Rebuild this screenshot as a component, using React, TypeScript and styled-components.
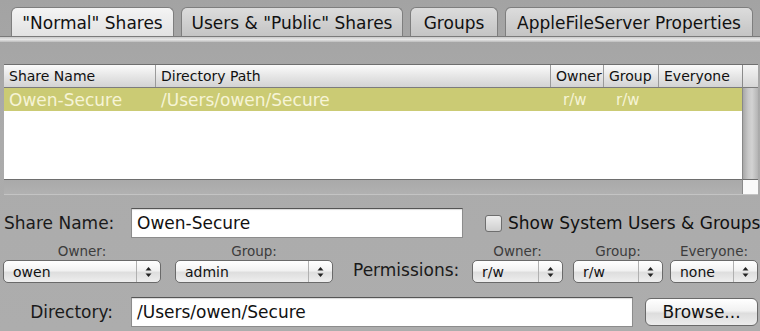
import React from "react";
import styled, { createGlobalStyle } from "styled-components";

const Global = createGlobalStyle`
  html, body { margin: 0; padding: 0; }
  body { font-family: "DejaVu Sans", "Liberation Sans", sans-serif; background: #a9a9a9; }
`;

const Window = styled.div`
  width: 760px;
  height: 331px;
  overflow: hidden;
  background: linear-gradient(180deg, #a3a3a3 0%, #ababab 40%, #adadad 100%);
  display: flex;
  flex-direction: column;
`;

const TabBar = styled.div`
  display: flex;
  gap: 7px;
  padding: 7px 0 0 11px;
  height: 29px;
`;

const Tab = styled.div<{ $active?: boolean; $w: number }>`
  width: ${(p) => p.$w}px;
  height: 29px;
  box-sizing: border-box;
  border: 1px solid #7e7e7e;
  border-bottom: none;
  border-radius: 6px 6px 0 0;
  background: ${(p) =>
    p.$active
      ? "linear-gradient(180deg, #f4f4f4 0%, #e2e2e2 100%)"
      : "linear-gradient(180deg, #dcdcdc 0%, #c4c4c4 100%)"};
  display: flex;
  align-items: center;
  justify-content: center;
  font-size: 17px;
  color: #111;
  padding-top: 1px;
  white-space: nowrap;
`;

const TabBase = styled.div`
  height: 6px;
  border-top: 1px solid #7a7a7a;
  background: linear-gradient(180deg, #c9c9c9 0%, #e6e6e6 50%, #bdbdbd 100%);
  box-sizing: border-box;
`;

const Body = styled.div`
  display: flex;
  flex-direction: column;
  padding: 22px 3px 0 4px;
`;

const TableFrame = styled.div`
  width: 754px;
  display: grid;
  grid-template-columns: 738px 16px;
  grid-template-rows: 23px 92px 14px;
  border-top: 1px solid #6f6f6f;
  border-bottom: 1px solid #c4c4c4;
`;

const HeaderRow = styled.div`
  display: grid;
  grid-template-columns: 152px 395px 53px 55px 83px;
  background: linear-gradient(180deg, #fbfbfb 0%, #e6e6e6 50%, #d3d3d3 100%);
  border-bottom: 1px solid #7c7c7c;
`;

const HeaderCell = styled.div`
  font-size: 14px;
  color: #111;
  padding-left: 5px;
  display: flex;
  align-items: center;
  border-right: 1px solid #9a9a9a;
  &:last-child { border-right: none; }
`;

const HeaderCorner = styled.div`
  background: linear-gradient(180deg, #f4f4f4 0%, #d6d6d6 100%);
  border-left: 1px solid #8a8a8a;
  border-bottom: 1px solid #7c7c7c;
`;

const Rows = styled.div`
  background: #fff;
  display: flex;
  flex-direction: column;
  border-bottom: 1px solid #6e6e6e;
`;

const Row = styled.div<{ $selected?: boolean }>`
  height: 23px;
  display: grid;
  grid-template-columns: 152px 395px 53px 55px 83px;
  background: ${(p) => (p.$selected ? "#cbcb74" : "transparent")};
  color: ${(p) => (p.$selected ? "#f6f4d6" : "#111")};
  align-items: center;
`;

const Cell = styled.div<{ $small?: boolean }>`
  padding-left: ${(p) => (p.$small ? 12 : 5)}px;
  font-size: ${(p) => (p.$small ? 15 : 17)}px;
  white-space: nowrap;
`;

const VScroll = styled.div`
  background: linear-gradient(90deg, #a8a8a8 0%, #c8c8c8 35%, #d2d2d2 60%, #b4b4b4 100%);
  border-left: 1px solid #888;
  border-bottom: 1px solid #6e6e6e;
`;

const HScroll = styled.div`
  background: linear-gradient(180deg, #a9a9a9 0%, #b1b1b1 100%);
`;

const Corner = styled.div`
  background: #fafafa;
  border-left: 1px solid #8a8a8a;
`;

const FormRow = styled.div<{ $mt: number }>`
  display: flex;
  align-items: center;
  margin-top: ${(p) => p.$mt}px;
`;

const Label = styled.div<{ $w: number }>`
  width: ${(p) => p.$w}px;
  text-align: right;
  font-size: 17px;
  color: #1a1a1a;
  flex: none;
  white-space: nowrap;
`;

const TextField = styled.div<{ $w: number }>`
  width: ${(p) => p.$w}px;
  height: 30px;
  box-sizing: border-box;
  background: #fff;
  border: 1px solid #8c8c8c;
  border-top-color: #555;
  box-shadow: inset 0 1px 1px rgba(0, 0, 0, 0.15);
  font-size: 17px;
  color: #111;
  display: flex;
  align-items: center;
  padding-left: 5px;
  flex: none;
`;

const CheckBox = styled.div`
  width: 17px;
  height: 17px;
  box-sizing: border-box;
  border: 1px solid #6e6e6e;
  border-radius: 3px;
  background: linear-gradient(180deg, #ededed 0%, #cfcfcf 100%);
  flex: none;
`;

const CheckLabel = styled.div`
  font-size: 17px;
  color: #111;
  margin-left: 6px;
  white-space: nowrap;
`;

const PopupGroup = styled.div<{ $w: number; $ml: number }>`
  display: flex;
  flex-direction: column;
  align-items: center;
  width: ${(p) => p.$w}px;
  margin-left: ${(p) => p.$ml}px;
  flex: none;
`;

const SmallCaption = styled.div`
  font-size: 13.5px;
  color: #3c3c3c;
  height: 17px;
  line-height: 17px;
`;

const Popup = styled.div<{ $w: number }>`
  width: ${(p) => p.$w}px;
  height: 23px;
  box-sizing: border-box;
  border: 1px solid #6a6a6a;
  border-radius: 5px;
  background: linear-gradient(180deg, #ffffff 0%, #f2f2f2 45%, #dedede 55%, #eeeeee 100%);
  display: flex;
  align-items: center;
  font-size: 14px;
  color: #111;
`;

const PopupText = styled.div`
  flex: 1;
  padding-left: 9px;
`;

const PopupArrows = styled.div`
  width: 23px;
  height: 100%;
  border-left: 1px solid #b0b0b0;
  display: flex;
  align-items: center;
  justify-content: center;
`;

const PermLabel = styled.div`
  font-size: 17px;
  color: #1a1a1a;
  margin: 17px 0 0 20px;
  width: 119px;
  flex: none;
  white-space: nowrap;
`;

const PopRow = styled.div`
  display: flex;
  align-items: flex-start;
  margin-top: 5px;
`;

const Button = styled.div`
  width: 113px;
  height: 28px;
  box-sizing: border-box;
  margin-left: 12px;
  border: 1px solid #6a6a6a;
  border-radius: 6px;
  background: linear-gradient(180deg, #ffffff 0%, #f1f1f1 45%, #dddddd 55%, #ececec 100%);
  display: flex;
  align-items: center;
  justify-content: center;
  font-size: 17px;
  color: #111;
  flex: none;
`;

const Arrows = () => (
  <svg width="7" height="12" viewBox="0 0 7 12">
    <path d="M3.5 1 L6.5 4.5 L0.5 4.5 Z" fill="#222" />
    <path d="M3.5 11 L6.5 7.5 L0.5 7.5 Z" fill="#222" />
  </svg>
);

const PopupControl = ({
  caption,
  value,
  w,
  ml,
}: {
  caption: string;
  value: string;
  w: number;
  ml: number;
}) => (
  <PopupGroup $w={w} $ml={ml}>
    <SmallCaption>{caption}</SmallCaption>
    <Popup $w={w}>
      <PopupText>{value}</PopupText>
      <PopupArrows>
        <Arrows />
      </PopupArrows>
    </Popup>
  </PopupGroup>
);

export default function App() {
  return (
    <Window>
      <Global />
      <TabBar>
        <Tab $active $w={163}>"Normal" Shares</Tab>
        <Tab $w={222}>Users &amp; "Public" Shares</Tab>
        <Tab $w={88}>Groups</Tab>
        <Tab $w={248}>AppleFileServer Properties</Tab>
      </TabBar>
      <TabBase />
      <Body>
        <TableFrame>
          <HeaderRow>
            <HeaderCell>Share Name</HeaderCell>
            <HeaderCell>Directory Path</HeaderCell>
            <HeaderCell>Owner</HeaderCell>
            <HeaderCell>Group</HeaderCell>
            <HeaderCell>Everyone</HeaderCell>
          </HeaderRow>
          <HeaderCorner />
          <Rows>
            <Row $selected>
              <Cell>Owen-Secure</Cell>
              <Cell>/Users/owen/Secure</Cell>
              <Cell $small>r/w</Cell>
              <Cell $small>r/w</Cell>
              <Cell $small></Cell>
            </Row>
          </Rows>
          <VScroll />
          <HScroll />
          <Corner />
        </TableFrame>

        <FormRow $mt={13}>
          <Label $w={109}>Share Name:</Label>
          <TextField $w={332} style={{ marginLeft: 18 }}>Owen-Secure</TextField>
          <CheckBox style={{ marginLeft: 22 }} />
          <CheckLabel>Show System Users &amp; Groups</CheckLabel>
        </FormRow>

        <PopRow>
          <PopupControl caption="Owner:" value="owen" w={158} ml={-1} />
          <PopupControl caption="Group:" value="admin" w={158} ml={14} />
          <PermLabel>Permissions:</PermLabel>
          <PopupControl caption="Owner:" value="r/w" w={91} ml={0} />
          <PopupControl caption="Group:" value="r/w" w={90} ml={10} />
          <PopupControl caption="Everyone:" value="none" w={88} ml={7} />
        </PopRow>

        <FormRow $mt={14}>
          <Label $w={109}>Directory:</Label>
          <TextField $w={502} style={{ marginLeft: 18 }}>/Users/owen/Secure</TextField>
          <Button>Browse...</Button>
        </FormRow>
      </Body>
    </Window>
  );
}
